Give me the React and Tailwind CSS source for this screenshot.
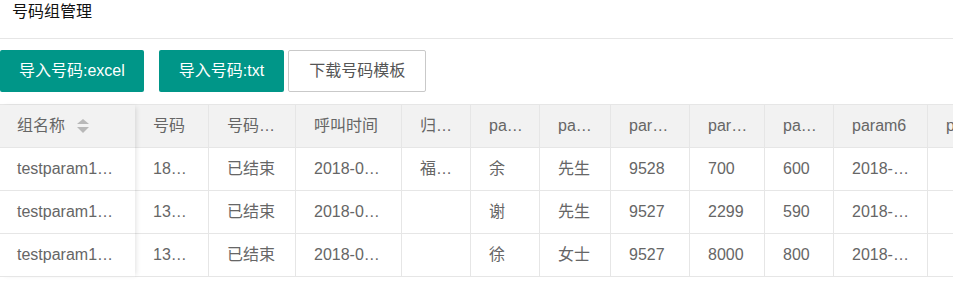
import React from "react";

const font = { fontFamily: '"Liberation Sans", Arial, "Noto Sans CJK SC", sans-serif' };

// widths of the scrolling columns (the first one is fixed on the left)
const cols = [
  { w: "w-[73px]", title: "号码" },
  { w: "w-[87px]", title: "号码…" },
  { w: "w-[106px]", title: "呼叫时间" },
  { w: "w-[69px]", title: "归…" },
  { w: "w-[69px]", title: "pa…" },
  { w: "w-[71px]", title: "pa…" },
  { w: "w-[79px]", title: "par…" },
  { w: "w-[75px]", title: "par…" },
  { w: "w-[69px]", title: "pa…" },
  { w: "w-[94px]", title: "param6" },
  { w: "w-[90px]", title: "param7" },
];

const rows = [
  ["testparam1…", "18…", "已结束", "2018-0…", "福…", "余", "先生", "9528", "700", "600", "2018-…", ""],
  ["testparam1…", "13…", "已结束", "2018-0…", "", "谢", "先生", "9527", "2299", "590", "2018-…", ""],
  ["testparam1…", "13…", "已结束", "2018-0…", "", "徐", "女士", "9527", "8000", "800", "2018-…", ""],
];

const SortIcon = () => (
  <svg width="12" height="15" viewBox="0 0 12 15" className="ml-[12px]">
    <polygon points="6,0 12,5 0,5" fill="#b8b8b8" />
    <polygon points="0,8 12,8 6,14" fill="#b8b8b8" />
  </svg>
);

export default function App() {
  return (
    <div className="w-[953px] h-[292px] bg-white overflow-hidden text-[16px] text-[#666]" style={font}>
      {/* Title bar */}
      <div className="h-[39px] border-b border-[#e6e6e6] pl-3 pt-[2px] leading-[20px] text-[#111]">号码组管理</div>

      {/* Toolbar */}
      <div className="flex items-center mt-[11px] h-[42px]">
        <button className="h-[42px] px-[19px] bg-[#009688] text-white rounded-[2px] whitespace-nowrap">导入号码:excel</button>
        <button className="h-[42px] ml-[15px] px-[20px] bg-[#009688] text-white rounded-[2px] whitespace-nowrap">导入号码:txt</button>
        <button className="h-[42px] ml-[4px] px-[20px] bg-white border border-[#c9c9c9] text-[#555] rounded-[2px] whitespace-nowrap">下载号码模板</button>
      </div>

      {/* Table */}
      <div className="mt-[12px] flex border-t border-[#e6e6e6]">
        {/* fixed left column */}
        <div className="w-[135px] shrink-0 relative z-10 shadow-[3px_0_5px_-2px_rgba(0,0,0,0.12)]">
          <div className="h-[43px] bg-[#f2f2f2] border-b border-[#e6e6e6] flex items-center pl-[17px]">
            组名称
            <SortIcon />
          </div>
          {rows.map((r, i) => (
            <div key={i} className="h-[43px] bg-white border-b border-[#e6e6e6] flex items-center pl-[17px] whitespace-nowrap">
              {r[0]}
            </div>
          ))}
        </div>

        {/* scrolling part */}
        <div className="flex-1 overflow-hidden">
          <div className="flex h-[43px] bg-[#f2f2f2] border-b border-[#e6e6e6]">
            {cols.map((c, i) => (
              <div key={i} className={`${c.w} shrink-0 flex items-center pl-[18px] whitespace-nowrap overflow-hidden ${i === 0 ? "" : "border-l border-[#e6e6e6]"}`}>
                {c.title}
              </div>
            ))}
          </div>
          {rows.map((r, ri) => (
            <div key={ri} className="flex h-[43px] border-b border-[#e6e6e6]">
              {cols.map((c, i) => (
                <div key={i} className={`${c.w} shrink-0 flex items-center pl-[18px] whitespace-nowrap overflow-hidden ${i === 0 ? "" : "border-l border-[#e6e6e6]"}`}>
                  {r[i + 1]}
                </div>
              ))}
            </div>
          ))}
        </div>
      </div>
    </div>
  );
}
